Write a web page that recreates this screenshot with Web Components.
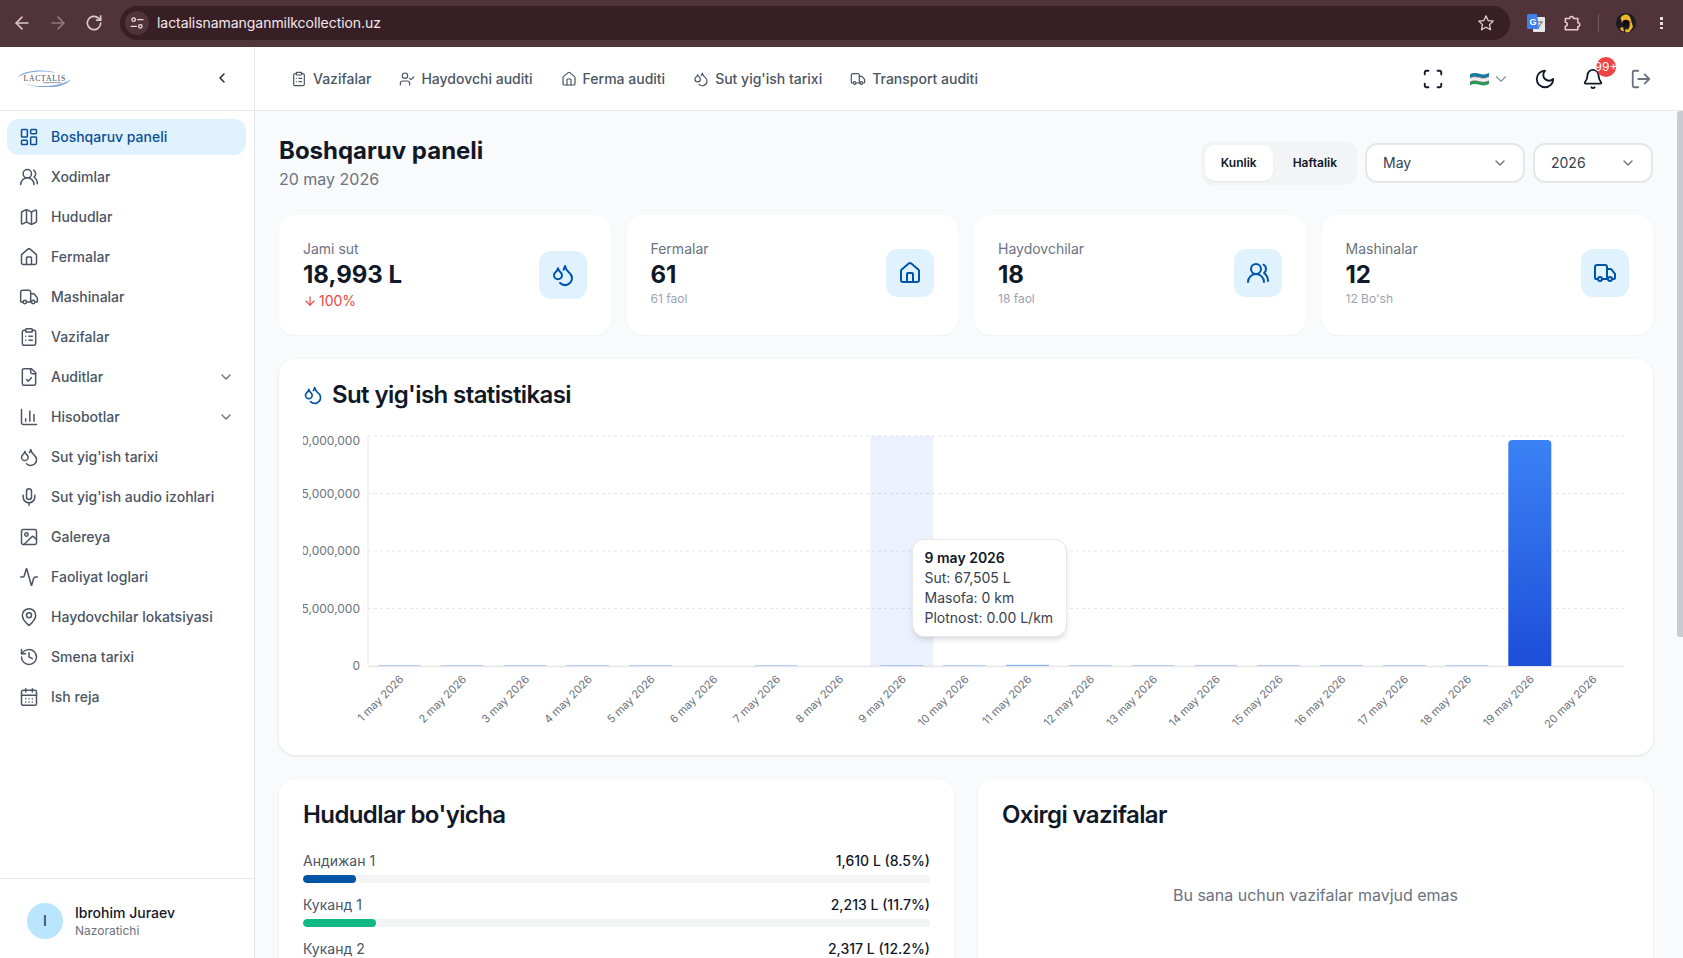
<!DOCTYPE html>
<html lang="uz">
<head>
<meta charset="utf-8">
<title>Boshqaruv paneli</title>
<style>
  html, body { margin: 0; height: 958px; overflow: hidden; background: #f9fafb; }
  body { font-family: Inter, "Noto Sans", sans-serif; display: flex; flex-direction: column; color: #111827; }
</style>
</head>
<body>
<browser-bar url="lactalisnamanganmilkcollection.uz"></browser-bar>
<app-layout>
  <app-sidebar slot="sidebar">
    <nav-item icon="dashboard" active>Boshqaruv paneli</nav-item>
    <nav-item icon="users">Xodimlar</nav-item>
    <nav-item icon="map">Hududlar</nav-item>
    <nav-item icon="house">Fermalar</nav-item>
    <nav-item icon="truck">Mashinalar</nav-item>
    <nav-item icon="clipboard">Vazifalar</nav-item>
    <nav-item icon="filecheck" expand>Auditlar</nav-item>
    <nav-item icon="chart" expand>Hisobotlar</nav-item>
    <nav-item icon="droplets">Sut yig'ish tarixi</nav-item>
    <nav-item icon="mic">Sut yig'ish audio izohlari</nav-item>
    <nav-item icon="image">Galereya</nav-item>
    <nav-item icon="activity">Faoliyat loglari</nav-item>
    <nav-item icon="pin">Haydovchilar lokatsiyasi</nav-item>
    <nav-item icon="history">Smena tarixi</nav-item>
    <nav-item icon="calendar">Ish reja</nav-item>
    <user-chip slot="footer" initial="I" name="Ibrohim Juraev" role="Nazoratichi"></user-chip>
  </app-sidebar>
  <app-header slot="header">
    <head-link icon="clipboard">Vazifalar</head-link>
    <head-link icon="usercheck">Haydovchi auditi</head-link>
    <head-link icon="house">Ferma auditi</head-link>
    <head-link icon="droplets">Sut yig'ish tarixi</head-link>
    <head-link icon="truck">Transport auditi</head-link>
  </app-header>
  <page-head title="Boshqaruv paneli" date="20 may 2026">
    <period-toggle></period-toggle>
    <select-box style="width:160px">May</select-box>
    <select-box style="width:120px">2026</select-box>
  </page-head>
  <stat-grid>
    <stat-card label="Jami sut" value="18,993 L" icon="droplets" sub="100%" trend></stat-card>
    <stat-card label="Fermalar" value="61" icon="house" sub="61 faol"></stat-card>
    <stat-card label="Haydovchilar" value="18" icon="users" sub="18 faol"></stat-card>
    <stat-card label="Mashinalar" value="12" icon="truck" sub="12 Bo'sh"></stat-card>
  </stat-grid>
  <milk-chart></milk-chart>
  <two-cols>
    <panel-card heading="Hududlar bo'yicha">
      <region-row name="Андижан 1" amount="1,610 L (8.5%)" pct="8.5" color="#0054a6"></region-row>
      <region-row name="Куканд 1" amount="2,213 L (11.7%)" pct="11.7" color="#10b981"></region-row>
      <region-row name="Куканд 2" amount="2,317 L (12.2%)" pct="12.2" color="#f59e0b"></region-row>
    </panel-card>
    <panel-card heading="Oxirgi vazifalar">
      <empty-note>Bu sana uchun vazifalar mavjud emas</empty-note>
    </panel-card>
  </two-cols>
</app-layout>

<script>
const ICONS = {
  dashboard:'<rect x="3" y="3" width="7" height="9" rx="1"/><rect x="14" y="3" width="7" height="5" rx="1"/><rect x="14" y="12" width="7" height="9" rx="1"/><rect x="3" y="16" width="7" height="5" rx="1"/>',
  users:'<path d="M18 21a8 8 0 0 0-16 0"/><circle cx="10" cy="8" r="5"/><path d="M22 20c0-3.37-2-6.5-4-8a5 5 0 0 0-.45-8.3"/>',
  map:'<path d="M14.106 5.553a2 2 0 0 0 1.788 0l3.659-1.83A1 1 0 0 1 21 4.619v12.764a1 1 0 0 1-.553.894l-4.553 2.277a2 2 0 0 1-1.788 0l-4.212-2.106a2 2 0 0 0-1.788 0l-3.659 1.83A1 1 0 0 1 3 19.381V6.618a1 1 0 0 1 .553-.894l4.553-2.277a2 2 0 0 1 1.788 0z"/><path d="M15 5.764v15"/><path d="M9 3.236v15"/>',
  house:'<path d="M15 21v-8a1 1 0 0 0-1-1h-4a1 1 0 0 0-1 1v8"/><path d="M3 10a2 2 0 0 1 .709-1.528l7-5.999a2 2 0 0 1 2.582 0l7 5.999A2 2 0 0 1 21 10v9a2 2 0 0 1-2 2H5a2 2 0 0 1-2-2z"/>',
  truck:'<path d="M14 18V6a2 2 0 0 0-2-2H4a2 2 0 0 0-2 2v11a1 1 0 0 0 1 1h2"/><path d="M15 18H9"/><path d="M19 18h2a1 1 0 0 0 1-1v-3.65a1 1 0 0 0-.22-.624l-3.48-4.35A1 1 0 0 0 17.52 8H14"/><circle cx="17" cy="18" r="2"/><circle cx="7" cy="18" r="2"/>',
  clipboard:'<rect x="8" y="2" width="8" height="4" rx="1"/><path d="M16 4h2a2 2 0 0 1 2 2v14a2 2 0 0 1-2 2H6a2 2 0 0 1-2-2V6a2 2 0 0 1 2-2h2"/><path d="M12 11h4"/><path d="M12 16h4"/><path d="M8 11h.01"/><path d="M8 16h.01"/>',
  filecheck:'<path d="M15 2H6a2 2 0 0 0-2 2v16a2 2 0 0 0 2 2h12a2 2 0 0 0 2-2V7Z"/><path d="M14 2v4a2 2 0 0 0 2 2h4"/><path d="m9 15 2 2 4-4"/>',
  chart:'<path d="M3 3v16a2 2 0 0 0 2 2h16"/><path d="M18 17V9"/><path d="M13 17V5"/><path d="M8 17v-3"/>',
  droplets:'<path d="M7 16.3c2.2 0 4-1.83 4-4.05 0-1.16-.57-2.26-1.71-3.19S7.29 6.75 7 5.3c-.29 1.45-1.14 2.84-2.29 3.76S3 11.1 3 12.25c0 2.22 1.8 4.05 4 4.05z"/><path d="M12.56 6.6A10.97 10.97 0 0 0 14 3.02c.5 2.5 2 4.9 4 6.5s3 3.5 3 5.5a6.98 6.98 0 0 1-11.91 4.97"/>',
  mic:'<path d="M12 2a3 3 0 0 0-3 3v7a3 3 0 0 0 6 0V5a3 3 0 0 0-3-3Z"/><path d="M19 10v2a7 7 0 0 1-14 0v-2"/><path d="M12 19v3"/>',
  image:'<rect x="3" y="3" width="18" height="18" rx="2"/><circle cx="9" cy="9" r="2"/><path d="m21 15-3.086-3.086a2 2 0 0 0-2.828 0L6 21"/>',
  activity:'<path d="M22 12h-2.48a2 2 0 0 0-1.93 1.46l-2.35 8.36a.25.25 0 0 1-.48 0L9.24 2.18a.25.25 0 0 0-.48 0l-2.35 8.36A2 2 0 0 1 4.49 12H2"/>',
  pin:'<path d="M20 10c0 4.993-5.539 10.193-7.399 11.799a1 1 0 0 1-1.202 0C9.539 20.193 4 14.993 4 10a8 8 0 0 1 16 0"/><circle cx="12" cy="10" r="3"/>',
  history:'<path d="M3 12a9 9 0 1 0 9-9 9.75 9.75 0 0 0-6.74 2.74L3 8"/><path d="M3 3v5h5"/><path d="M12 7v5l4 2"/>',
  calendar:'<path d="M8 2v4"/><path d="M16 2v4"/><rect x="3" y="4" width="18" height="18" rx="2"/><path d="M3 10h18"/><path d="M8 14h.01"/><path d="M12 14h.01"/><path d="M16 14h.01"/><path d="M8 18h.01"/><path d="M12 18h.01"/><path d="M16 18h.01"/>',
  usercheck:'<path d="M16 21v-2a4 4 0 0 0-4-4H6a4 4 0 0 0-4 4v2"/><circle cx="9" cy="7" r="4"/><path d="m16 11 2 2 4-4"/>',
  scan:'<path d="M3 7V5a2 2 0 0 1 2-2h2"/><path d="M17 3h2a2 2 0 0 1 2 2v2"/><path d="M21 17v2a2 2 0 0 1-2 2h-2"/><path d="M7 21H5a2 2 0 0 1-2-2v-2"/>',
  moon:'<path d="M12 3a6 6 0 0 0 9 9 9 9 0 1 1-9-9Z"/>',
  bell:'<path d="M10.268 21a2 2 0 0 0 3.464 0"/><path d="M3.262 15.326A1 1 0 0 0 4 17h16a1 1 0 0 0 .74-1.673C19.41 13.956 18 12.499 18 8A6 6 0 0 0 6 8c0 4.499-1.411 5.956-2.738 7.326"/>',
  logout:'<path d="M9 21H5a2 2 0 0 1-2-2V5a2 2 0 0 1 2-2h4"/><path d="m16 17 5-5-5-5"/><path d="M21 12H9"/>',
  arrowdown:'<path d="M12 5v14"/><path d="m19 12-7 7-7-7"/>',
  down:'<path d="m6 9 6 6 6-6"/>',
  left:'<path d="m15 18-6-6 6-6"/>',
  arrowleft:'<path d="m12 19-7-7 7-7"/><path d="M19 12H5"/>',
  arrowright:'<path d="M5 12h14"/><path d="m12 5 7 7-7 7"/>',
  reload:'<path d="M20 12a8 8 0 1 1-2.6-5.9L20 8.5"/><path d="M20 3.5v5h-5"/>',
  tune:'<circle cx="7" cy="7" r="2.6"/><path d="M13 7h8"/><circle cx="17" cy="17" r="2.6"/><path d="M3 17h8"/>',
  star:'<path d="M12 3.5l2.6 5.6 6.1.7-4.5 4.2 1.2 6.1L12 17.1l-5.4 3 1.2-6.1-4.5-4.2 6.1-.7z"/>',
  puzzle:'<path d="M4 6.5h5.2a2.3 2.3 0 0 1 4.6 0H19v5.2a2.3 2.3 0 0 1 0 4.6V20H4v-4.2a2.3 2.3 0 0 0 0-4.6z"/>'
};

function define(tag, css, html, setup) {
  customElements.define(tag, class extends HTMLElement {
    constructor() {
      super();
      this.attachShadow({ mode: 'open' });
    }
    connectedCallback() {
      const attr = n => this.getAttribute(n) ?? '';
      this.shadowRoot.innerHTML = '<style>' + css + '</style>' + (typeof html === 'function' ? html(attr, this) : html);
      if (setup) setup(this.shadowRoot, attr, this);
    }
  });
}

define('x-icon',
  ':host{display:inline-flex;flex:none;line-height:0}svg{display:block;fill:none;stroke:currentColor;stroke-linecap:round;stroke-linejoin:round}',
  a => {
    const s = a('size') || 20;
    return `<svg width="${s}" height="${s}" viewBox="0 0 24 24" stroke-width="${a('weight') || 2}">${ICONS[a('name')] || ''}</svg>`;
  });

define('browser-bar',
  `:host{display:flex;align-items:center;flex:none;height:47px;background:#513439;box-sizing:border-box;padding:0 0 1px 12px;color:#e9dcdf}
   .nav{display:flex;gap:16px;width:92px;margin-right:16px}
   .nav x-icon{color:#d8c9cc}.nav .off{color:#8f7b80}
   .omni{flex:none;width:1390px;height:34px;border-radius:17px;background:#381f25;display:flex;align-items:center;box-sizing:border-box;padding:0 14px 0 5px}
   .site{width:24px;height:24px;border-radius:50%;background:#513439;display:flex;align-items:center;justify-content:center;margin-right:8px}
   .url{font:14px/20px Inter,sans-serif;color:#f3e9eb;flex:1;letter-spacing:-.05px}
   .star{color:#e3d8da}
   .tools{display:flex;align-items:center;flex:1;position:relative;height:100%}
   .tr{position:absolute;left:17px;top:14px}
   .pz{position:absolute;left:52px;top:13px;color:#f0c8cf}
   .dv{position:absolute;left:88px;top:14px;width:1px;height:18px;background:#6f5a5f}
   .av{position:absolute;left:106px;top:13px}
   .kb{position:absolute;left:150px;top:16px;width:3px;height:13px;background:radial-gradient(circle,#e9dcdf 1.5px,transparent 1.7px) 0 0/3px 5px}`,
  a => `<div class="nav"><x-icon name="arrowleft" size="20"></x-icon><x-icon class="off" name="arrowright" size="20"></x-icon><x-icon name="reload" size="20"></x-icon></div>
    <div class="omni"><span class="site"><x-icon name="tune" size="16"></x-icon></span><span class="url">${a('url')}</span><x-icon class="star" name="star" size="20" weight="1.5"></x-icon></div>
    <div class="tools">
      <svg class="tr" width="18" height="19" viewBox="0 0 18 19"><rect x="6" y="3" width="12" height="15" rx="1" fill="#e6e6e6"/><path d="M10 8h6M13 7v1.500M11 14l4-6" stroke="#777" stroke-width="1.100" fill="none"/><path d="M1.500 0H10l2 15H1.500A1.500 1.500 0 0 1 0 13.500V1.500A1.500 1.500 0 0 1 1.500 0z" fill="#3f7fe8"/><text x="2.500" y="10.500" font-family="Liberation Sans,sans-serif" font-size="9" font-weight="700" fill="#fff">G</text></svg>
      <x-icon class="pz" name="puzzle" size="20" weight="1.8"></x-icon>
      <span class="dv"></span>
      <svg class="av" width="20" height="20" viewBox="0 0 20 20"><circle cx="10" cy="10" r="10" fill="#1a1c24"/><path d="M10 1.500c3 0 4.500 2.500 5 5.500l2 7-2.500 3.500-2-2c2-2 1.500-6-.5-7.500S7 7 6 9L4.500 5C5.500 2.800 7.500 1.500 10 1.500z" fill="#f0b429"/><path d="M4 15l3-1 1 4.500-3-1zM9 16.500l6-.5-1.500 3-4 .5z" fill="#f0b429"/><path d="M5.500 8.500l1.500 1M13 8l1.500 2" stroke="#d9453a" stroke-width="1.400"/><circle cx="10" cy="10" r="3.300" fill="#0d0d12"/></svg>
      <span class="kb"></span>
    </div>`);

define('app-layout',
  `:host{display:grid;grid-template-columns:255px 1fr 6px;grid-template-rows:64px 1fr;flex:1;min-height:0;overflow:hidden}
   .side{grid-row:1/3;grid-column:1;min-height:0;display:flex}
   .top{grid-row:1;grid-column:2/4}
   main{grid-row:2;grid-column:2;overflow:hidden;padding:24px 24px 0;min-width:0;display:flex;flex-direction:column;gap:24px}
   .track{grid-row:2;grid-column:3;background:#f9fafb}
   .thumb{height:526px;background:#c9cdd1;border-radius:3px 0 0 3px}`,
  `<div class="side"><slot name="sidebar"></slot></div><div class="top"><slot name="header"></slot></div><main><slot></slot></main><div class="track"><div class="thumb"></div></div>`);

define('app-sidebar',
  `:host{display:flex;flex-direction:column;width:255px;box-sizing:border-box;background:#fff;border-right:1px solid #e5e7eb;font-family:Inter,sans-serif}
   .brand{height:64px;box-sizing:border-box;border-bottom:1px solid #e5e7eb;display:flex;align-items:center;justify-content:space-between;padding:0 24px 1px 17px;flex:none}
   nav{flex:1;display:flex;flex-direction:column;gap:4px;padding:8px 8px 8px 7px}
   .foot{flex:none;height:80px;box-sizing:border-box;border-top:1px solid #e5e7eb;display:flex;align-items:center;padding:5px 0 0 27px}
   .brand x-icon{color:#1f2937}`,
  `<div class="brand">
     <svg width="56" height="17" viewBox="0 0 56 17"><path d="M.5 7.500C5 2.500 14 .5 24 .6c6 .1 11 .9 15 2.300-6-1.300-13-1.800-20-1.200C11 2.400 5 4.400.5 7.500z" fill="#7ea4dc"/><path d="M8 13.500c8 3 22 3.400 33 1 5-1.100 9-2.700 12.500-5-2 3.300-6.500 5.700-13 7-10 1.800-24 .6-32.500-3z" fill="#7ea4dc"/><text x="6.500" y="11" font-family="Liberation Serif,serif" font-size="7.500" letter-spacing=".85" fill="#3c4258">LACTALIS</text><rect x="26" y="12" width="18" height="1.200" fill="#a7abb8"/></svg>
     <x-icon name="left" size="16" weight="2.200"></x-icon>
   </div>
   <nav><slot></slot></nav>
   <div class="foot"><slot name="footer"></slot></div>`);

define('nav-item',
  `:host{display:flex;align-items:center;gap:12px;height:36px;box-sizing:border-box;padding:0 12px;border-radius:12px;font:500 14px/20px Inter,sans-serif;color:#4b5563}
   :host([active]){background:#e0f2fe;color:#0b4f94}
   .t{flex:1;white-space:nowrap}
   .c{color:#6b7280}`,
  (a, el) => `<x-icon name="${a('icon')}" size="20" weight="1.8"></x-icon><span class="t"><slot></slot></span>${el.hasAttribute('expand') ? '<x-icon class="c" name="down" size="16"></x-icon>' : ''}`);

define('user-chip',
  `:host{display:flex;align-items:center;gap:12px;font-family:Inter,sans-serif}
   .a{width:36px;height:36px;border-radius:50%;background:#bae6fd;color:#0c4a6e;display:flex;align-items:center;justify-content:center;font:500 14px/20px Inter,sans-serif}
   .n{font:500 14px/20px Inter,sans-serif;color:#111827}
   .r{font:12px/16px Inter,sans-serif;color:#6b7280}`,
  a => `<div class="a">${a('initial')}</div><div><div class="n">${a('name')}</div><div class="r">${a('role')}</div></div>`);

define('app-header',
  `:host{display:flex;align-items:center;justify-content:space-between;height:64px;box-sizing:border-box;background:#fff;border-bottom:1px solid #e5e7eb;padding:0 24px;font-family:Inter,sans-serif}
   .links{display:flex;gap:4px}
   .act{display:flex;align-items:center;gap:12px}
   .b{display:flex;align-items:center;justify-content:center;width:36px;height:36px;position:relative;color:#111827}
   .lang{display:flex;align-items:center;gap:3px;padding:0 5px 0 7px;height:36px;color:#8b92a0}
   .badge{position:absolute;left:21px;top:-4px;width:20px;height:20px;border-radius:50%;background:#ef4444;color:#fff;font:12px/20px Inter,sans-serif;display:flex;align-items:center;justify-content:center;white-space:nowrap}`,
  `<div class="links"><slot></slot></div>
   <div class="act">
     <div class="b"><x-icon name="scan" size="22"></x-icon></div>
     <div class="lang">
       <svg width="19" height="14" viewBox="0 0 19 14"><path d="M0 2.200C3 .6 6 .8 9.500 1.800 13 2.800 16 2.600 19 1v3.800c-3 1.600-6 1.800-9.500.8C6 4.600 3 4.400 0 6z" fill="#1a7ba3"/><path d="M0 6C3 4.400 6 4.600 9.500 5.600c3.500 1 6.500.8 9.500-.8v4c-3 1.600-6 1.800-9.500.8C6 8.600 3 8.400 0 10z" fill="#eceeef"/><path d="M0 10c3-1.600 6-1.400 9.500-.4 3.500 1 6.500.8 9.500-.8v3.200c-3 1.600-6 1.800-9.500.8C6 11.800 3 11.600 0 13.200z" fill="#249a55"/><path d="M0 6C3 4.400 6 4.600 9.500 5.600c3.500 1 6.500.8 9.500-.8M0 10c3-1.600 6-1.400 9.500-.4 3.500 1 6.500.8 9.500-.8" stroke="#8a5058" stroke-width=".5" fill="none"/></svg>
       <x-icon name="down" size="18" weight="1.600"></x-icon>
     </div>
     <div class="b"><x-icon name="moon" size="22"></x-icon></div>
     <div class="b"><x-icon name="bell" size="22"></x-icon><span class="badge">99+</span></div>
     <div class="b" style="color:#6b7280"><x-icon name="logout" size="22"></x-icon></div>
   </div>`);

define('head-link',
  `:host{display:flex;align-items:center;gap:6px;padding:6px 12px;font:500 14px/20px Inter,sans-serif;color:#4b5563;white-space:nowrap}`,
  a => `<x-icon name="${a('icon')}" size="16" weight="1.8"></x-icon><slot></slot>`);

define('page-head',
  `:host{display:flex;align-items:center;justify-content:space-between;flex:none;height:56px}
   h1{margin:0;font:700 24px/32px Inter,sans-serif;color:#111827}
   p{margin:0;font:16px/24px Inter,sans-serif;color:#6b7280}
   .r{display:flex;align-items:center;gap:8px}`,
  a => `<div><h1>${a('title')}</h1><p>${a('date')}</p></div><div class="r"><slot></slot></div>`);

define('period-toggle',
  `:host{display:flex;gap:4px;padding:4px;height:44px;box-sizing:border-box;background:#f3f4f6;border-radius:12px;font:600 12px/16px Inter,sans-serif;color:#111827}
   span{display:flex;align-items:center;padding:0 16px;border-radius:10px}
   .on{background:#fff;box-shadow:0 1px 2px rgba(0,0,0,.05)}`,
  `<span class="on">Kunlik</span><span>Haftalik</span>`);

define('select-box',
  `:host{display:flex;align-items:center;justify-content:space-between;height:40px;box-sizing:border-box;border:2px solid #e5e7eb;border-radius:12px;background:#fff;padding:0 15px 0 16px;font:14px/20px Inter,sans-serif;color:#374151}
   x-icon{color:#6b7280}`,
  `<slot></slot><x-icon name="down" size="16"></x-icon>`);

define('stat-grid',
  `:host{display:grid;grid-template-columns:repeat(4,1fr);gap:16px;flex:none}`,
  `<slot></slot>`);

define('stat-card',
  `:host{display:block;height:120px;box-sizing:border-box;padding:24px;background:#fff;border-radius:16px;box-shadow:0 1px 2px rgba(0,0,0,.04);font-family:Inter,sans-serif}
   .row{display:flex;align-items:center;justify-content:space-between}
   .l{font:14px/20px Inter,sans-serif;color:#6b7280}
   .v{font:700 24px/32px Inter,sans-serif;color:#111827}
   .s{font:12px/16px Inter,sans-serif;color:#9ca3af}
   .t{display:flex;align-items:center;gap:2px;font:14px/20px Inter,sans-serif;color:#ef4444}
   .i{width:48px;height:48px;border-radius:12px;background:#e0f2fe;color:#0054a6;display:flex;align-items:center;justify-content:center}`,
  (a, el) => `<div class="row"><div><div class="l">${a('label')}</div><div class="v">${a('value')}</div>${el.hasAttribute('trend') ? `<div class="t"><x-icon name="arrowdown" size="14"></x-icon>${a('sub')}</div>` : `<div class="s">${a('sub')}</div>`}</div><div class="i"><x-icon name="${a('icon')}" size="24"></x-icon></div></div>`);

define('milk-chart',
  `:host{display:block;height:396px;flex:none;box-sizing:border-box;padding:24px;background:#fff;border-radius:16px;box-shadow:0 1px 3px rgba(0,0,0,.1);font-family:Inter,sans-serif}
   h2{display:flex;align-items:center;gap:9px;margin:0 0 24px;font:600 24px/24px Inter,sans-serif;letter-spacing:-.6px;color:#111827}
   h2 x-icon{color:#0054a6}
   .wrap{position:relative;height:300px}
   svg{display:block;font:12px Inter,sans-serif}
   .tick{font-size:11px}
   .tip{position:absolute;left:608.5px;top:108px;width:155px;height:98px;box-sizing:border-box;background:#fff;border:1px solid #e5e7eb;border-radius:12px;box-shadow:0 4px 6px -1px rgba(0,0,0,.1),0 2px 4px -2px rgba(0,0,0,.1);padding:8px 12px;font:14px/20px Inter,sans-serif;color:#374151;white-space:nowrap}
   .tip b{display:block;font-weight:600;color:#111827}`,
  () => {
    const L = 65, T = 5, R = 1321, B = 235, step = (R - L) / 20;
    const grid = [0, 57.5, 115, 172.5].map(d =>
      `<line x1="${L}" x2="${R}" y1="${T + d}" y2="${T + d}" stroke="#e5e7eb" stroke-dasharray="3 3"/>`).join('');
    const yl = [['20,000,000', 14], ['15,000,000', 67], ['10,000,000', 124], ['5,000,000', 182], ['0', 239]]
      .map(([t, y]) => `<text x="57" y="${y}" text-anchor="end" fill="#6b7280">${t}</text>`).join('');
    const vals = { 0:1,1:1,2:1,3:1,4:1,6:1,8:1,9:1,10:1.2,11:1,12:1,13:1,14:1,15:1,16:1,17:1 };
    let bars = '', ticks = '';
    for (let i = 0; i < 20; i++) {
      const cx = L + step * (i + .5);
      if (vals[i]) bars += `<rect x="${cx - 21.5}" y="${B - vals[i]}" width="43" height="${vals[i]}" fill="#3b82f6" fill-opacity="${i === 10 ? .6 : .35}"/>`;
      const tx = cx + 5, ty = B + 14;
      ticks += `<text class="tick" x="${tx}" y="${ty}" transform="rotate(-45 ${tx} ${ty})" text-anchor="end" fill="#6b7280">${i + 1} may 2026</text>`;
    }
    const cx19 = L + step * 18.5;
    return `<h2><x-icon name="droplets" size="20"></x-icon>Sut yig'ish statistikasi</h2>
      <div class="wrap">
        <svg width="1326" height="300" viewBox="0 0 1326 300">
          <defs><linearGradient id="g" x1="0" y1="0" x2="0" y2="1"><stop offset="0" stop-color="#3b82f6"/><stop offset="1" stop-color="#1d4ed8"/></linearGradient></defs>
          ${grid}
          <line x1="${L}" x2="${L}" y1="${T}" y2="${B}" stroke="#e5e7eb"/>
          <line x1="${L}" x2="${R}" y1="${B + .5}" y2="${B + .5}" stroke="#e5e7eb" stroke-width="1.500"/>
          <rect x="${L + step * 8}" y="${T}" width="${step}" height="${B - T}" fill="#3b82f6" fill-opacity=".1"/>
          ${bars}
          <path d="M${cx19 - 21.5} ${B}V13a4 4 0 0 1 4-4h35a4 4 0 0 1 4 4V${B}z" fill="url(#g)"/>
          ${yl}${ticks}
        </svg>
        <div class="tip"><b>9 may 2026</b>Sut: 67,505 L<br>Masofa: 0 km<br>Plotnost: 0.00 L/km</div>
      </div>`;
  });

define('two-cols',
  `:host{display:grid;grid-template-columns:1fr 1fr;gap:24px;flex:none}`,
  `<slot></slot>`);

define('panel-card',
  `:host{display:block;box-sizing:border-box;padding:24px;height:360px;background:#fff;border-radius:16px;box-shadow:0 1px 3px rgba(0,0,0,.08);font-family:Inter,sans-serif}
   h2{margin:0 0 24px;font:600 24px/24px Inter,sans-serif;letter-spacing:-.6px;color:#111827}
   .b{display:flex;flex-direction:column;gap:12px}`,
  a => `<h2>${a('heading')}</h2><div class="b"><slot></slot></div>`);

define('region-row',
  `:host{display:block;font:14px/20px Inter,sans-serif}
   .top{display:flex;justify-content:space-between;margin-bottom:4px}
   .n{color:#4b5563}.a{color:#111827;font-weight:500}
   .bar{height:8px;border-radius:4px;background:#f3f4f6;overflow:hidden}
   .f{height:100%;border-radius:4px}`,
  a => `<div class="top"><span class="n">${a('name')}</span><span class="a">${a('amount')}</span></div><div class="bar"><div class="f" style="width:${a('pct')}%;background:${a('color')}"></div></div>`);

define('empty-note',
  `:host{display:block;text-align:center;font:16px/24px Inter,sans-serif;color:#6b7280;padding-top:32px}`,
  `<slot></slot>`);
</script>
</body>
</html>
